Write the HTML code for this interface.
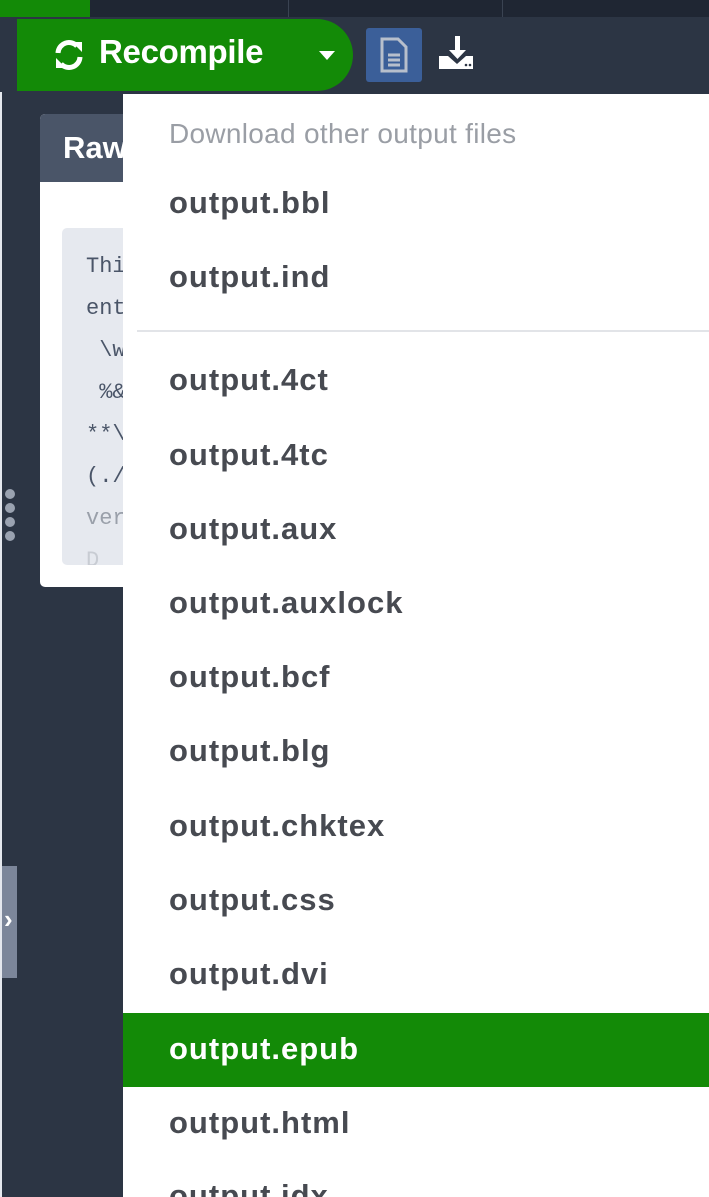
<!DOCTYPE html>
<html><head><meta charset="utf-8"><style>
*{margin:0;padding:0;box-sizing:border-box}
html,body{width:709px;height:1197px;overflow:hidden}
body{background:#2c3544;font-family:"Liberation Sans",sans-serif;position:relative}
.top{position:absolute;left:0;top:0;width:709px;height:17px;background:#1f2633}
.top .g{position:absolute;left:0;top:0;width:90px;height:17px;background:#138a07}
.top .s{position:absolute;top:0;width:1px;height:17px;background:#3a4352}
.bar{position:absolute;left:0;top:17px;width:709px;height:75px;background:#2c3544}
.strip{position:absolute;left:0;top:92px;width:2px;height:1105px;background:#e5e8ee}
.btn{position:absolute;left:17px;top:19px;width:336px;height:72px;background:#138a07;border-radius:0 36px 36px 0;color:#fff;font-weight:bold;font-size:33px}
.btn span{position:absolute;left:82px;top:14px;letter-spacing:-0.3px}
.btn .car{position:absolute;left:302px;top:32px;width:0;height:0;border-left:8px solid transparent;border-right:8px solid transparent;border-top:9px solid #fff}
.doc{position:absolute;left:366px;top:28px;width:56px;height:54px;background:#3b5f99;border-radius:3px}
.card{position:absolute;left:40px;top:114px;width:120px;height:473px;background:#fff;border-radius:5px;overflow:hidden}
.card .h{height:68px;background:#4a5568;color:#fff;font-weight:bold;font-size:31px;padding:16px 0 0 23px}
.code{position:absolute;left:22px;top:114px;width:110px;height:337px;background:#e6e9ef;border-radius:5px;font-family:"Liberation Mono",monospace;font-size:22px;color:#4a5568;line-height:42px;padding:18px 0 0 24px;white-space:pre;overflow:hidden}
.d{position:absolute;left:5px;width:10px;height:10px;border-radius:50%;background:#9aa2b0}
.tab{position:absolute;left:2px;top:866px;width:15px;height:112px;background:#7c869a;color:#fff;font-weight:bold;font-size:26px}
.menu{position:absolute;left:123px;top:94px;width:586px;height:1103px;background:#fff;overflow:hidden}
.it{position:absolute;left:46px;font-size:31px;font-weight:bold;color:#474a51;letter-spacing:1px}
.hd{position:absolute;left:46px;top:24px;font-size:28px;color:#9a9ea5;letter-spacing:0.3px}
.hl{position:absolute;left:0;top:919px;width:586px;height:74px;background:#138a07}
.div{position:absolute;left:14px;top:236px;width:572px;height:2px;background:#e2e4e8}
</style></head><body>
<div class="top"><div class="g"></div><div class="s" style="left:288px"></div><div class="s" style="left:502px"></div></div>
<div class="bar"></div>
<div class="strip"></div>
<div class="btn">
<svg style="position:absolute;left:36px;top:20px" width="32" height="32" viewBox="0 0 32 32"><path d="M5 14a11 11 0 0 1 19-7" stroke="#fff" stroke-width="5" fill="none"/><path d="M19 3h10v10z" fill="#fff"/><path d="M27 18a11 11 0 0 1-19 7" stroke="#fff" stroke-width="5" fill="none"/><path d="M13 29H3V19z" fill="#fff"/></svg>
<span>Recompile</span><div class="car"></div></div>
<div class="doc"><svg style="position:absolute;left:13px;top:9px" width="30" height="36" viewBox="0 0 30 36"><path d="M3 2h16l8 8v24H3z" fill="none" stroke="#b7bfcc" stroke-width="3"/><path d="M9 18h12M9 23h12M9 28h12" stroke="#b7bfcc" stroke-width="3"/></svg></div>
<svg style="position:absolute;left:438px;top:36px" width="36" height="34" viewBox="0 0 36 34"><path d="M17 0h5v14h6l-8.5 9L11 14h6z" fill="#fff"/><path d="M1 20h9l9 8 9-8h7v13H1z" fill="#fff"/><circle cx="28" cy="29" r="1.3" fill="#2c3544"/><circle cx="32" cy="29" r="1.3" fill="#2c3544"/></svg>
<div class="card"><div class="h">Raw</div><div class="code">Thi
ent
 \w
 %&amp;
**\
(./
<span style="color:#9aa0aa">ver</span>
<span style="color:#c8ccd3">D</span></div></div>
<div class="d" style="top:489px"></div><div class="d" style="top:503px"></div><div class="d" style="top:517px"></div><div class="d" style="top:531px"></div>
<div class="tab"><span style="position:absolute;left:2px;top:38px">›</span></div>
<div class="menu">
<div class="hd">Download other output files</div>
<div class="it" style="top:91px">output.bbl</div>
<div class="it" style="top:165px">output.ind</div>
<div class="div"></div>
<div class="it" style="top:268px">output.4ct</div>
<div class="it" style="top:343px">output.4tc</div>
<div class="it" style="top:417px">output.aux</div>
<div class="it" style="top:491px">output.auxlock</div>
<div class="it" style="top:565px">output.bcf</div>
<div class="it" style="top:639px">output.blg</div>
<div class="it" style="top:714px">output.chktex</div>
<div class="it" style="top:788px">output.css</div>
<div class="it" style="top:862px">output.dvi</div>
<div class="hl"></div>
<div class="it" style="top:937px;color:#fff">output.epub</div>
<div class="it" style="top:1011px">output.html</div>
<div class="it" style="top:1084px">output.idx</div>
</div>
</body></html>
